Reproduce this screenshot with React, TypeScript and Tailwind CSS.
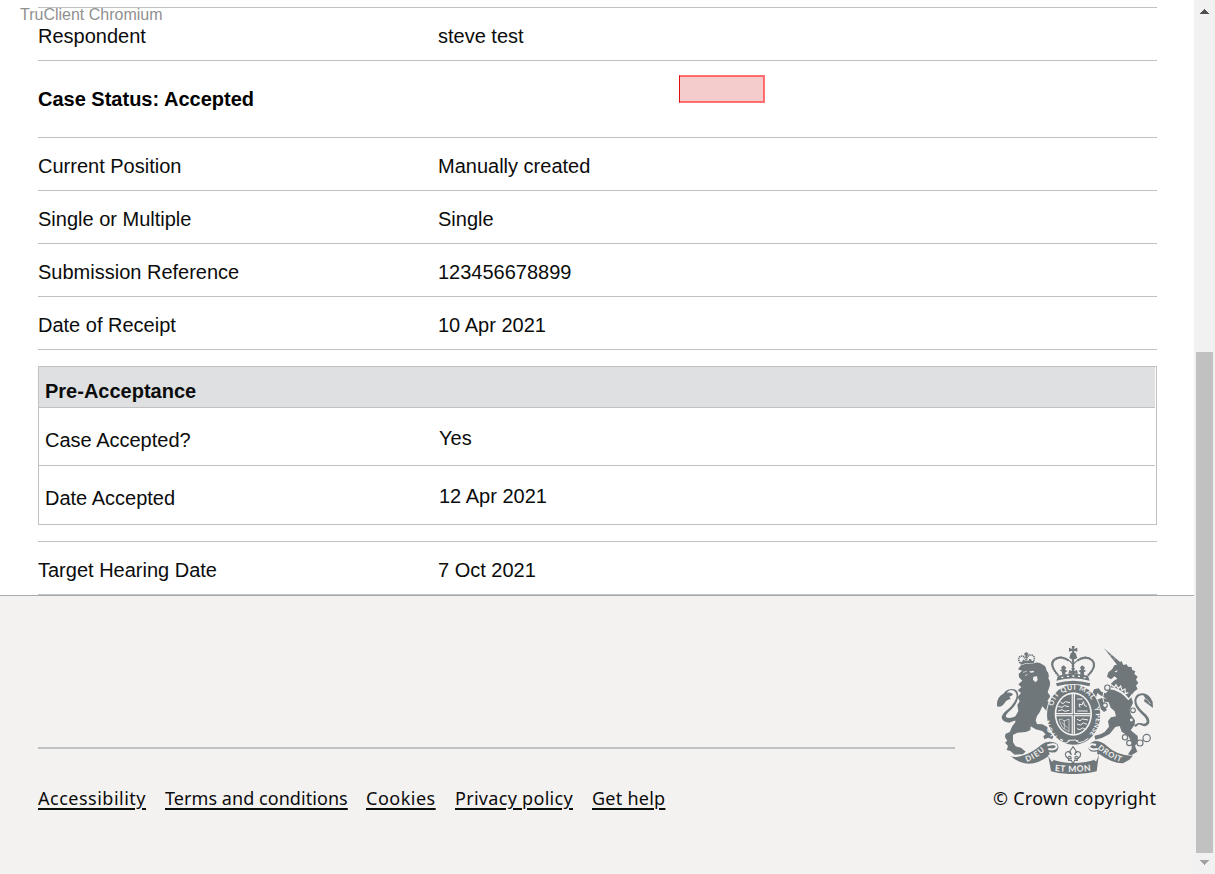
import type { ReactNode } from "react";

const SANS = "font-['Liberation_Sans',Arial,sans-serif]";

function Row({ label, value }: { label: string; value: string }) {
  return (
    <div className="flex h-[53px] border-b border-[#bfc1c3] pt-[13px] text-[20px] leading-[30px]">
      <div className="w-[400px]">{label}</div>
      <div>{value}</div>
    </div>
  );
}

function PanelRow({ label, value, last = false }: { label: string; value: string; last?: boolean }) {
  return (
    <div className={last ? "flex h-[58px] pl-[6px] text-[20px] leading-[30px]" : "mr-px flex h-[58px] border-b border-[#bfc1c3] pl-[6px] text-[20px] leading-[30px]"}>
      <div className="w-[394px] pt-[17px]">{label}</div>
      <div className="pt-[15px]">{value}</div>
    </div>
  );
}

function FooterLink({ className, children }: { className: string; children: ReactNode }) {
  return (
    <a href="#" className={`whitespace-nowrap underline decoration-[1.5px] underline-offset-[3px] ${className}`}>
      {children}
    </a>
  );
}

function Crest() {
  const ink = "#6f777b";
  const paper = "#f3f2f1";
  return (
    <svg className="h-[130px] w-[156px]" viewBox="36 30 468 390" fill={ink} role="img" aria-label="Royal coat of arms">
      <defs>
        <path id="garterLeft" d="M218 305 C203 290 195 272 193 248" />
        <path id="garterTop" d="M204 216 C214 152 309 146 325 208" />
        <path id="garterRight" d="M324 208 C341 247 332 278 307 304" />
        <path id="mottoLeft" d="M125 381 Q158 369 184 342" />
        <path id="mottoMid" d="M208 408 Q264 414 321 407" />
        <path id="mottoRight" d="M337 340 Q370 369 411 382" />
      </defs>

      {/* lion */}
      <path d="M108 91 Q123 84 143 86 Q161 78 171 88 Q184 93 184 105 Q195 118 190 130 Q198 142 194 154 L188 172 L196 184 L187 198 L201 208 L206 232 L203 247 L194 252 L186 240 L187 230 L172 214 L164 232 L156 243 L152 256 L156 267 L172 268 L187 276 L191 289 L206 303 L202 313 L190 308 L178 313 L175 304 L182 298 L172 288 L152 283 L137 274 L136 286 L122 291 L97 293 L84 300 L84 322 L92 334 L108 338 L122 350 L113 358 L89 359 L76 348 L65 345 L69 333 L60 323 L67 317 L60 307 L61 297 L74 291 L82 273 L91 262 L90 246 L100 228 L97 210 L104 199 L98 186 L108 174 L98 166 L109 157 L100 148 L112 137 L102 127 L101 117 L111 107 L99 103 Z" />
      <path d="M131 110 L144 107 L148 111 L139 113 Z M145 125 L156 124 L158 136 L151 142 L144 134 Z" fill={paper} />
      <path d="M114 112 L125 109 M120 122 L128 118" stroke={paper} strokeWidth="2" />
      <path d="M95 255 L72 263 Q50 260 50 246 Q53 234 70 222 Q92 202 95 183 Q94 167 79 165 Q66 166 61 184 L37 213 Q35 185 55 176 Q64 163 79 162 Q101 161 100 184 Q97 206 78 224 Q60 239 63 246 Q72 253 92 244 Z" />
      <path d="M36 214 Q35 185 58 177 Q75 168 84 178 Q80 185 73 184 L77 193 Q67 192 59 204 Q50 218 36 214 Z" />

      {/* lion's crown */}
      <g fill="none" stroke={ink} strokeWidth="4">
        <path d="M106 86 Q125 77 147 82" strokeWidth="7" />
        <path d="M106 84 Q96 72 106 64 Q117 60 124 77 Q127 58 140 60 Q153 66 145 80" strokeDasharray="4 2" strokeWidth="5" />
        <path d="M124 52 V69 M118 58 H130 M113 76 l6 4 M132 74 l7 3" strokeWidth="6" />
      </g>

      {/* unicorn */}
      <path d="M357 40 L406 82 L399 93 Z" />
      <path d="M364 49 L368 51 M374 60 L380 61 M385 71 L391 72" stroke={paper} strokeWidth="1.2" />
      <path d="M400 88 L409 77 L415 90 L425 88 L429 95 L440 96 L441 104 L451 109 L448 117 L458 125 L453 134 L460 143 L453 152 L458 162 L447 170 L442 178 L377 147 L387 137 L397 131 L389 124 L378 133 L366 125 L370 112 L382 102 L388 91 Z" />
      <path d="M388 110 l10 -5 l-3 7 z" fill={paper} />
      <path d="M385 145 Q415 146 440 178 L431 190 Q408 158 376 157 Z" />
      <path d="M380 151 l9 6 l4 -8 l7 12 l7 -8 l4 14 l9 -5 l1 14 l9 -3" fill="none" stroke={paper} strokeWidth="3.5" />
      <path d="M374 163 Q405 166 430 196 L439 187 L444 203 L434 225 L438 239 L450 256 L449 269 L437 286 L458 303 L459 317 L450 333 L457 350 L439 361 L429 358 L440 341 L440 321 L429 302 L410 290 L404 273 L391 276 L374 297 L352 308 L331 314 L328 302 L346 298 L359 291 L372 275 L369 258 L378 247 L393 244 L389 229 L377 218 L371 202 L361 200 L358 214 L366 225 L357 231 L347 222 L337 207 L337 194 L350 189 L365 191 L346 181 L337 174 L333 187 L341 199 L330 200 L321 178 L327 163 L341 160 L349 170 L362 175 Z" />
      <path d="M447 252 L461 241 Q469 244 472 254 Q472 263 464 268 L456 282 L447 272 Z" fill="none" />
      <path d="M452 276 L462 268 Q484 281 493 263 Q496 248 474 230 Q453 212 454 195 Q459 179 475 181 L480 188 L477 199 L489 208 L504 219 L503 201 Q494 177 474 175 Q451 174 448 196 Q447 216 469 236 Q486 250 485 260 Q482 270 467 264 L459 264 L447 271 Z" />
      <path d="M469 187 Q489 191 496 207" fill="none" stroke={paper} strokeWidth="2" />
      <g fill="none" stroke={ink} strokeWidth="3.5">
        <circle cx="367" cy="158" r="8" fill={paper} />
        <path d="M357 169 Q349 188 357 203" stroke={paper} strokeWidth="3" />
        <circle cx="360" cy="211" r="7" fill={paper} />
        <circle cx="444" cy="226" r="7" fill={paper} />
        <circle cx="439" cy="255" r="6" fill={paper} />
        <circle cx="420" cy="307" r="8" fill={paper} />
        <circle cx="433" cy="324" r="8" fill={paper} />
        <circle cx="465" cy="324" r="9" fill={paper} />
        <circle cx="485" cy="309" r="11" fill={paper} />
        <path d="M441 322 L456 326 M472 318 L476 315 M422 299 L431 285" />
      </g>

      {/* ground and ribbon */}
      <path d="M76 362 Q88 371 115 361 Q145 351 169 329 Q185 316 211 323 Q227 331 216 348 Q210 356 192 350 L197 372 Q230 384 264 384 Q304 384 335 372 L337 349 Q317 354 311 343 Q308 323 330 318 Q348 317 366 333 Q397 363 444 362 L433 374 L414 385 Q379 384 342 356 L335 409 Q300 419 264 417 Q228 419 198 409 L190 364 Q154 391 119 385 Q94 379 76 362 Z" />
      <path d="M187 331 Q214 322 215 336 Q211 346 190 342 M333 330 Q311 323 313 338 Q319 346 338 342 M191 360 L203 379 M339 358 L331 378" fill="none" stroke={paper} strokeWidth="6" />

      {/* fleur-de-lis */}
      <path d="M264 335 L273 348 L269 360 Q277 343 286 354 Q289 364 280 370 Q278 361 270 366 V371 H277 V376 H269 L264 387 L259 376 H251 V371 H258 V366 Q250 361 248 370 Q239 364 242 354 Q251 343 259 360 L255 348 Z" fill="none" stroke={ink} strokeWidth="3.5" />

      {/* garter and shield */}
      <ellipse cx="266" cy="240" rx="83" ry="93" fill={paper} />
      <ellipse cx="266" cy="239" rx="80" ry="90" />
      <ellipse cx="265" cy="237" rx="56" ry="65" fill={paper} />
      <ellipse cx="265" cy="237" rx="51" ry="60" />
      <path d="M265 175 V299 M213 239 H317" stroke={paper} strokeWidth="10" />
      <path d="M265 177 V298 M214 239 H316" stroke={ink} strokeWidth="2.5" />
      <g fill="none" stroke={paper} strokeWidth="3">
        <path d="M226 201 l8 5 l7 -6 l14 3 M219 214 l12 3 l7 -5 l14 3 M219 228 l12 -4 l9 5 l13 -3" />
        <path d="M276 253 l9 4 l8 -5 l16 3 M276 267 l10 3 l9 -6 l11 4 M276 281 l9 3 l7 -5 l7 2" />
        <path d="M276 192 H293 M277 228 H308 M285 217 l-3 -10 l9 3 l4 -10 l4 12 l7 2" />
        <path d="M222 254 Q231 249 237 258 L252 252 V290 L232 278 Z M230 262 L248 279 M238 256 V281" strokeWidth="2" />
      </g>
      <path d="M213 309 Q237 329 248 322 L252 316 L273 315 L280 323 Q295 323 310 310" fill="none" stroke={paper} strokeWidth="3" />
      <path d="M226 312 L234 317 M248 318 h5 M274 318 h6" stroke={paper} strokeWidth="4" />
      <g fill={paper} className="font-['Lato',sans-serif] text-[21px] font-bold">
        <text><textPath href="#garterLeft" textLength="56" startOffset="1">HON</textPath></text>
        <text><textPath href="#garterTop" textLength="150" startOffset="2">OIT QUI MAL</textPath></text>
        <text><textPath href="#garterRight" textLength="86" startOffset="10">Y PENSE</textPath></text>
        <text className="text-[23px]"><textPath href="#mottoLeft" textLength="65" startOffset="0">DIEU</textPath></text>
        <text className="text-[26px]"><textPath href="#mottoMid" textLength="109" startOffset="1">ET MON</textPath></text>
        <text className="text-[23px]"><textPath href="#mottoRight" textLength="81" startOffset="0">DROIT</textPath></text>
      </g>

      {/* royal crown */}
      <path d="M208 156 L218 119 L314 119 L320 156 Q265 142 208 156 Z" fill={paper} />
      <path d="M219 122 L214 137 Q263 122 314 137 L309 122 Q263 111 219 122 Z" />
      <path d="M213 145 Q263 129 316 145 L313 154 Q264 140 216 154 Z" />
      <g fill="none" stroke={ink}>
        <path d="M219 119 Q191 91 205 75 Q225 57 253 77 L264 89 L277 76 Q302 57 323 76 Q338 94 309 121" strokeWidth="3.5" />
        <path d="M218 119 Q194 91 207 76 Q226 60 251 77 M311 119 Q336 92 321 76 Q302 61 278 77" strokeWidth="7" strokeLinecap="round" strokeDasharray="0.1 7" />
        <path d="M264 72 V116" strokeWidth="8" strokeLinecap="round" strokeDasharray="0.1 7" />
      </g>
      <path d="M257 55 Q264 48 272 55 L277 69 Q265 77 253 69 Z M260 33 H269 L267 42 L277 38 V50 L267 47 L269 57 H260 L262 47 L252 50 V38 L262 42 Z" />
      <path d="M231 119 V110 L224 106 L231 103 L228 97 L236 91 L244 98 L240 104 L248 108 L241 112 V119 Z M286 119 V112 L280 108 L288 104 L285 97 L292 91 L300 98 L296 104 L304 107 L297 112 V121 Z M250 116 L253 105 L262 109 L259 99 H270 L266 109 L276 105 L279 116 Z" />
      <path d="M229 127 h6 M246 124 h6 M262 123 h6 M279 124 h6 M296 128 h6" stroke={paper} strokeWidth="4" />
    </svg>
  );
}

export default function App() {
  return (
    <div className={`relative flex h-[874px] w-[1215px] overflow-hidden bg-white text-[#0b0c0c] ${SANS}`}>
      <div className="flex w-[1194px] flex-col">
        <main className="flex h-[595px] flex-col pt-[7px] pr-[37px] pl-[38px]">
          <div className="border-t border-[#bfc1c3]">
            <Row label="Respondent" value="steve test" />
          </div>
          <div className="flex h-[77px] border-b border-[#bfc1c3]">
            <h2 className="w-[641px] pt-[23px] text-[20px] leading-[30px] font-bold text-black">Case Status: Accepted</h2>
            <div className="mt-[14px] h-7 w-[86px] border border-[#ff7474] border-l-[#e01010] bg-[#f5cccc] shadow-[inset_-1px_-1px_0_#ff6666,inset_0_1px_0_#ff6666]" />
          </div>
          <Row label="Current Position" value="Manually created" />
          <Row label="Single or Multiple" value="Single" />
          <Row label="Submission Reference" value="123456678899" />
          <Row label="Date of Receipt" value="10 Apr 2021" />
          <section className="mt-4 h-[159px] border border-[#bfc1c3]">
            <h3 className="mr-px h-[41px] border-b border-[#bfc1c3] bg-[#dee0e2] pt-[9px] pl-[6px] text-[20px] leading-[30px] font-bold">Pre-Acceptance</h3>
            <PanelRow label="Case Accepted?" value="Yes" />
            <PanelRow label="Date Accepted" value="12 Apr 2021" last />
          </section>
          <div className="mt-4 border-t border-[#bfc1c3]">
            <Row label="Target Hearing Date" value="7 Oct 2021" />
          </div>
        </main>
        <footer className="flex h-[279px] justify-between border-t border-[#a8abad] bg-[#f3f2f1] px-[38px] font-['Noto_Sans',sans-serif] text-[18px] leading-[28px]">
          <div className="w-[917px] pt-[151px]">
            <div className="h-0.5 bg-[#bfc1c3]" />
            <nav className="mt-[35px] flex gap-[19px]">
              <FooterLink className="w-[108px] tracking-[0.5px]">Accessibility</FooterLink>
              <FooterLink className="w-[182px] tracking-[0.06px]">Terms and conditions</FooterLink>
              <FooterLink className="w-[70px] tracking-[0.5px]">Cookies</FooterLink>
              <FooterLink className="w-[118px] tracking-[0.3px]">Privacy policy</FooterLink>
              <FooterLink className="w-[74px] tracking-[0.25px]">Get help</FooterLink>
            </nav>
          </div>
          <div className="flex w-[163px] flex-col pt-[49px]">
            <div className="pl-1"><Crest /></div>
            <div className="mt-[9px] tracking-[0.26px] whitespace-nowrap">© Crown copyright</div>
          </div>
        </footer>
      </div>
      <div className="flex w-[21px] flex-col items-center bg-[#f1f1f1]">
        <svg className="mt-[9px] h-[5px] w-[9px]" viewBox="0 0 9 5" fill="#505050" shapeRendering="crispEdges"><path d="M4 0h1v1h1v1h1v1h1v1h1v1H0V4h1V3h1V2h1V1h1Z" /></svg>
        <div className="mt-[338px] h-[501px] w-[17px] bg-[#c1c1c1]" />
        <svg className="mt-[7px] h-[5px] w-[9px]" viewBox="0 0 9 5" fill="#a3a3a3" shapeRendering="crispEdges"><path d="M0 0h9v1H8v1H7v1H6v1H5v1H4V4H3V3H2V2H1V1H0Z" /></svg>
      </div>
      <div className="absolute top-[5px] left-[20px] text-[16px] leading-[20px] text-[#909090]">TruClient Chromium</div>
    </div>
  );
}
